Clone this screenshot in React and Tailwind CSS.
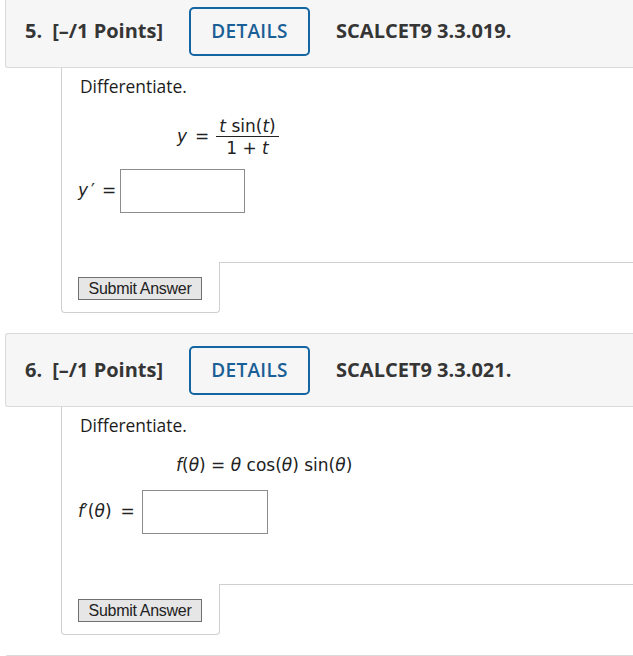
import React from 'react';

// --- DATA ---
const QUESTIONS = [
  { num: '5.', code: 'SCALCET9 3.3.019.', kind: 'frac' },
  { num: '6.', code: 'SCALCET9 3.3.021.', kind: 'theta' },
];

const mathFont = { fontFamily: '"DejaVu Sans", Verdana, sans-serif' };

// --- HEADER ---
const QuestionHeader = ({ num, code }) => (
  <div className="h-[74px] flex items-center border border-r-0 border-[#dadada] rounded-l-[3px] bg-[#f6f6f6] pl-[19px] text-[#353535] font-['Open_Sans',sans-serif]">
    <span className="text-[20px] font-bold">{num}</span>
    <span className="ml-[10px] text-[20px] font-bold">[–/1 Points]</span>
    <button className="ml-[26px] w-[121px] h-[49px] border-2 border-[#1466a2] rounded-[5px] bg-[#f6f6f6] text-[19px] font-semibold text-[#1a5f96] tracking-[0.3px]">
      DETAILS
    </button>
    <span className="ml-[26px] text-[20px] font-bold">{code}</span>
  </div>
);

// --- ANSWER BOX ---
const AnswerBox = ({ width }) => (
  <div className={`h-[44px] border border-[#8c8c8c] bg-white ${width}`}></div>
);

// --- SUBMIT STRIP ---
const SubmitStrip = () => (
  <div className="flex">
    <div className="w-[159px] h-[51px] border-x border-b border-[#cfcfcf] rounded-b-[4px] pt-[15px] pl-[16px]">
      <button className="block h-[23px] w-[124px] border border-[#707070] bg-[#e6e6e6] text-[16px] leading-none text-[#222] font-['Liberation_Sans',Arial,sans-serif] tracking-[-0.3px]">
        Submit Answer
      </button>
    </div>
    <div className="flex-1 border-t border-[#cfcfcf]"></div>
  </div>
);

const Prompt = () => (
  <div className="text-[17.4px] leading-[24px] text-[#1c1c1c] font-['Open_Sans',sans-serif]">Differentiate.</div>
);

const FracBody = () => (
  <>
    <div className="border-l border-[#cfcfcf] pl-[18px] pt-[6px] pb-[49px]">
      <Prompt />
      <div className="mt-[18px] ml-[97px] flex items-center text-[17px] text-[#222]" style={mathFont}>
        <span className="italic">y</span>
        <span className="ml-[8px] mr-[7px]">=</span>
        <span className="inline-flex flex-col items-center">
          <span className="leading-[20px] px-[3px]"><i>t</i> sin(<i>t</i>)</span>
          <span className="h-px w-full bg-[#222]"></span>
          <span className="leading-[20px] pt-px">1 + <i>t</i></span>
        </span>
      </div>
      <div className="mt-[11px] flex items-center text-[17px] text-[#222]" style={mathFont}>
        <i className="-ml-[2px]">y</i>
        <span className="ml-[3px]">′</span>
        <span className="ml-[7px]">=</span>
        <div className="ml-[4px]"><AnswerBox width="w-[125px]" /></div>
      </div>
    </div>
    <SubmitStrip />
  </>
);

const ThetaBody = () => (
  <>
    <div className="border-l border-[#cfcfcf] pl-[18px] pt-[6px] pb-[50px]">
      <Prompt />
      <div className="mt-[16px] ml-[96px] text-[17px] leading-[24px] text-[#222] whitespace-pre" style={mathFont}>
        <i>f</i>(<i>θ</i>) = <i>θ</i> cos(<i>θ</i>) sin(<i>θ</i>)
      </div>
      <div className="mt-[13px] flex items-center text-[17px] text-[#222]" style={mathFont}>
        <span className="-ml-[2px]"><i>f</i>′(<i>θ</i>)</span>
        <span className="ml-[9px]">=</span>
        <div className="ml-[7px]"><AnswerBox width="w-[126px]" /></div>
      </div>
    </div>
    <SubmitStrip />
  </>
);

const Question = ({ q }) => (
  <div className="mb-[20px]">
    <QuestionHeader num={q.num} code={q.code} />
    <div className="ml-[56px]">
      {q.kind === 'frac' ? <FracBody /> : <ThetaBody />}
    </div>
  </div>
);

// --- APP ---
export default function App() {
  return (
    <div className="w-full h-[656px] overflow-hidden bg-white">
      <div className="w-[660px] -mt-[6px] pl-[5px]">
        {QUESTIONS.map((q) => <Question key={q.num} q={q} />)}
        {/* next question header, only its top edge is in view */}
        <div className="h-[74px] border border-r-0 border-[#dadada] rounded-l-[3px] bg-[#f6f6f6]"></div>
      </div>
    </div>
  );
}
